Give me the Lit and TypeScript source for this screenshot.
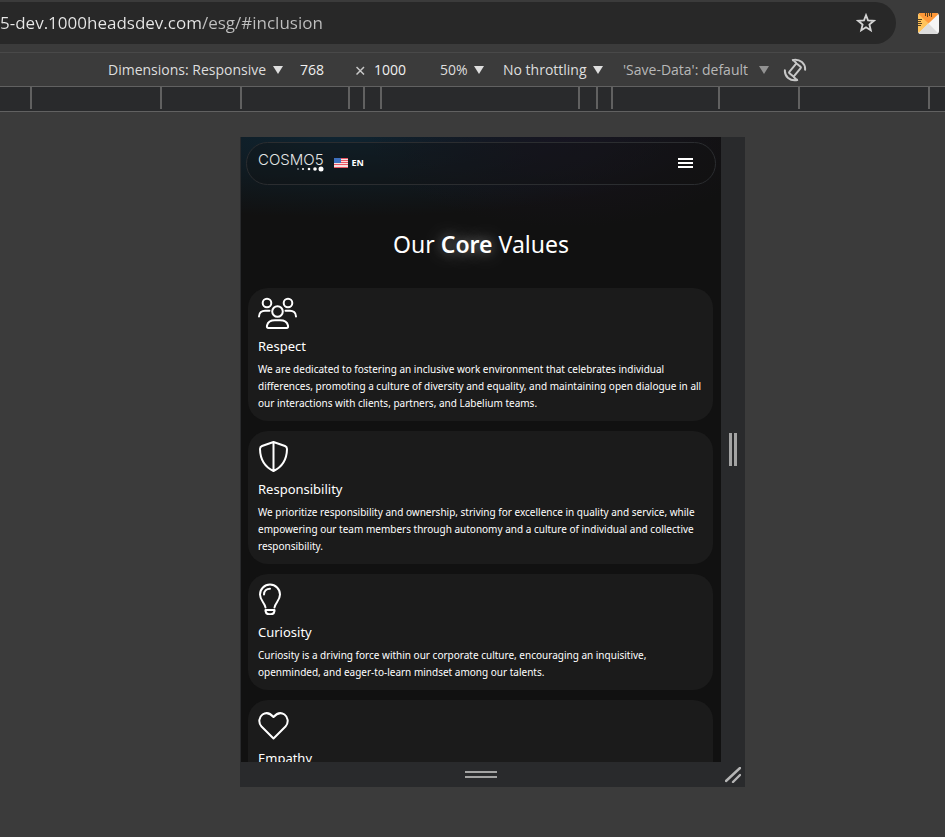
import { LitElement, html, css, svg } from "lit";
import { customElement } from "lit/decorators.js";

const TICK_GAPS = [130, 80, 108, 15, 17, 198, 18, 15, 107, 80, 130];

const icons = {
  people: svg`<svg class="icon" width="40" height="32" viewBox="0 0 40 32" aria-hidden="true">
    <circle cx="9" cy="6" r="4.3"/><circle cx="30" cy="6" r="4.3"/><circle cx="19.500" cy="14.500" r="5.300"/>
    <path d="M1 19.500C1 15.500 4 13.700 7 13.700H11.500M38 19.500C38 15.500 35 13.700 32 13.700H27.500"/>
    <path d="M10.500 31H28.500Q30.500 31 30 28.500C29 24.500 25.500 23.300 22 23.300H17C13.500 23.300 10 24.500 9 28.500Q8.500 31 10.500 31Z"/>
  </svg>`,
  shield: svg`<svg class="icon" width="40" height="32" viewBox="0 0 40 32" aria-hidden="true">
    <path d="M15.500 2L27 6Q29 6.800 29 9C28.800 19 24 27 15.500 31C7 27 2.200 19 2 9Q2 6.800 4 6ZM15.500 2V31"/>
  </svg>`,
  bulb: svg`<svg class="icon" width="40" height="32" viewBox="0 0 40 32" aria-hidden="true">
    <path d="M7.500 24.500C7 20 2 17.500 2 11.500A10 10 0 0 1 22 11.500C22 17.500 17 20 16.500 24.500M6 11.500C6 8 8.500 5.700 12 5.700"/>
    <path d="M7.500 27H16.500V28Q16 31.300 13 31.300H11Q8 31.300 7.500 28Z"/>
  </svg>`,
  heart: svg`<svg class="icon" width="40" height="32" viewBox="0 0 40 32" aria-hidden="true">
    <path d="M15.500 29.500L3.500 17.500C0 13.500 1 8 4.500 5.500C8 3.200 12.200 4.200 15.500 8C18.800 4.200 23 3.200 26.500 5.500C30 8 31 13.500 27.500 17.500Z"/>
  </svg>`,
};

const VALUES = [
  { icon: icons.people, title: "Respect", text: "We are dedicated to fostering an inclusive work environment that celebrates individual differences, promoting a culture of diversity and equality, and maintaining open dialogue in all our interactions with clients, partners, and Labelium teams." },
  { icon: icons.shield, title: "Responsibility", text: "We prioritize responsibility and ownership, striving for excellence in quality and service, while empowering our team members through autonomy and a culture of individual and collective responsibility." },
  { icon: icons.bulb, title: "Curiosity", text: "Curiosity is a driving force within our corporate culture, encouraging an inquisitive, openminded, and eager-to-learn mindset among our talents." },
  { icon: icons.heart, title: "Empathy", text: "" },
];

@customElement("cosmo-page")
export class CosmoPage extends LitElement {
  static styles = css`
    :host {
      display: block;
      overflow: hidden;
      padding: 5px 5px 0;
      box-sizing: border-box;
      color: #fff;
      font-family: "Noto Sans", sans-serif;
      background:
        radial-gradient(ellipse 200px 90px at 68% 0, #1a1322aa 0%, transparent 100%),
        radial-gradient(ellipse 380px 80px at 20% 0, #0f2431 0%, transparent 100%),
        #111;
    }
    .header {
      display: flex;
      align-items: center;
      height: 43px;
      box-sizing: border-box;
      padding: 0 22px 2px 11px;
      border: 1px solid #2b2d30;
      border-radius: 22px;
      background: #11111155;
    }
    .logo {
      display: flex;
      flex-direction: column;
      align-items: flex-end;
      color: #e4e6e6;
      text-decoration: none;
      font: 300 15px/12px Inter, sans-serif;
    }
    .dots { display: block; }
    .language {
      display: flex;
      align-items: center;
      gap: 4px;
      margin-left: 10px;
      padding: 0;
      border: 0;
      background: none;
      color: #fff;
      font: 700 9px/12px "Noto Sans", sans-serif;
    }
    .menu {
      display: block;
      margin-left: auto;
      padding: 0;
      border: 0;
      background: none;
      line-height: 0;
    }
    .heading {
      margin: 43px 0 27px;
      text-align: center;
      font-size: 23px;
      font-weight: 400;
      line-height: 33px;
    }
    .glow { font-weight: 600; text-shadow: 0 0 12px #ffffff55, 0 0 24px #ffffff66; }
    .cards { display: grid; gap: 10px; padding: 0 3px 0 2px; }
    .card {
      padding: 9px 10px;
      border-radius: 20px;
      background: #1b1b1b;
    }
    .icon {
      display: block;
      fill: none;
      stroke: #fff;
      stroke-width: 2;
      stroke-linecap: round;
      stroke-linejoin: round;
    }
    .title { margin: 7px 0 5px; font-size: 13px; font-weight: 400; line-height: 20px; }
    .text { margin: 0; font-size: 10px; font-weight: 400; line-height: 17px; }
  `;

  render() {
    return html`
      <header class="header">
        <a class="logo" href="#" aria-label="COSMO5">
          <span>COSMO5</span>
          <svg class="dots" width="28" height="6" fill="#fff" aria-hidden="true">
            <circle cx="2" cy="3" r=".7"/><circle cx="7" cy="3" r="1"/><circle cx="13" cy="3" r="1.300"/><circle cx="19" cy="3" r="1.800"/><circle cx="25" cy="3" r="2.500"/>
          </svg>
        </a>
        <button class="language">
          <svg width="14" height="10" viewBox="0 0 14 10" aria-hidden="true">
            <path fill="#f8dfe0" d="M0 0H14V10H0Z"/>
            <path stroke="#e95461" d="M0 .5H14M0 2.500H14M0 4.500H14M0 6.500H14M0 9.500H14"/>
            <path fill="#3d70bd" d="M0 0H7V5H0Z"/>
          </svg>
          EN
        </button>
        <button class="menu" aria-label="Menu">
          <svg width="15" height="10" aria-hidden="true"><path stroke="#fff" stroke-width="2" d="M0 1H15M0 5H15M0 9H15"/></svg>
        </button>
      </header>
      <h2 class="heading">Our <span class="glow">Core</span> Values</h2>
      <div class="cards">
        ${VALUES.map((v) => html`
          <section class="card">
            ${v.icon}
            <h3 class="title">${v.title}</h3>
            <p class="text">${v.text}</p>
          </section>`)}
      </div>
    `;
  }
}

@customElement("app-root")
export class AppRoot extends LitElement {
  static styles = css`
    :host {
      display: flex;
      flex-direction: column;
      min-height: 100vh;
      overflow: hidden;
      background: #3b3b3b;
      color: #dedede;
      font: 14px/20px "Open Sans", sans-serif;
    }
    .address-row { display: flex; align-items: center; gap: 22px; height: 48px; padding: 0 6px 2px 0; box-sizing: border-box; margin-bottom: 4px; }
    .address {
      display: flex;
      flex: 1;
      align-items: center;
      height: 42px;
      padding-right: 20px;
      border-radius: 0 21px 21px 0;
      background: #282828;
    }
    .url {
      flex: 1;
      min-width: 0;
      padding: 0;
      border: 0;
      outline: 0;
      font: 17px/24px "Open Sans", sans-serif;
      color: transparent;
      background: linear-gradient(90deg, #e8e8e8 202px, #c0c0c0 202px) text;
    }
    .plain { display: block; padding: 0; border: 0; background: none; line-height: 0; }
    .toolbar {
      display: flex;
      align-items: center;
      height: 34px;
      padding-left: 108px;
      box-sizing: border-box;
      border-top: 1px solid #494949;
      white-space: nowrap;
    }
    .drop { display: flex; align-items: center; gap: 6px; }
    .drop select {
      appearance: none;
      padding: 0;
      border: 0;
      background: none;
      color: inherit;
      font: inherit;
    }
    .drop.quiet { gap: 10px; color: #b8b8b8; }
    .quiet svg { opacity: .7; }
    .size {
      width: 50px;
      padding: 0;
      border: 0;
      background: none;
      color: #f0f0f0;
      font: inherit;
    }
    .dimensions { display: flex; align-items: center; margin: 0 16px 0 17px; gap: 9px; }
    .times { display: block; margin-left: -3px; }
    .throttle { margin: 0 20px 0 19px; }
    .rotate { margin-left: 14px; }
    .ruler {
      display: flex;
      justify-content: center;
      height: 26px;
      box-sizing: border-box;
      padding: 0 0 2px 14px;
      border: solid #616161;
      border-width: 1px 0;
      background: #292a2c;
    }
    .tick { flex: none; box-sizing: border-box; border-left: 2px solid #616161; }
    .tick:last-child { border-right: 2px solid #616161; }
    .stage { display: flex; flex: 1; justify-content: center; align-items: flex-start; padding: 25px 0 50px 40px; }
    .device {
      display: grid;
      grid-template: minmax(0, 625px) 25px / minmax(0, 480px) 24px;
      padding-left: 1px;
      background: #292a2c;
    }
    .screen { min-height: 0; }
    .handle { display: grid; place-items: center; }
  `;

  private arrow = () => html`<svg width="10" height="8" viewBox="0 0 10 8" aria-hidden="true"><path fill="currentColor" d="M0 0H10L5 8Z"/></svg>`;

  render() {
    return html`
      <div class="address-row">
        <div class="address">
          <input class="url" aria-label="Address" value="5-dev.1000headsdev.com/esg/#inclusion" />
          <button class="plain" aria-label="Bookmark">
            <svg width="20" height="20" viewBox="0 0 20 20"><path fill="none" stroke="#d5d5d5" stroke-width="1.800" d="M10 2.200L12 7.300L17.800 7.800L13.400 11.500L14.800 17.300L10 14.200L5.200 17.300L6.600 11.500L2.200 7.800L8 7.300Z"/></svg>
          </button>
        </div>
        <button class="plain" aria-label="Page ruler">
          <svg width="21" height="21" viewBox="0 0 21 21">
            <rect width="21" height="21" rx="3" fill="#f5f5f5"/>
            <path fill="#ffc45c" d="M3 0L10.500 10.500L1 20Q0 19 0 18V3Q0 0 3 0Z"/>
            <path fill="#ff9838" d="M2 0H18Q20 0 20.500 1L10.500 10.500L.5 1Z"/>
            <path fill="#ddd" d="M10.500 10.500L20 20Q19 21 18 21H3Q1 21 .5 20Z"/>
            <path stroke="#58401e" d="M7.500 0V3M9.500 0V4M11.500 0V3M13.500 0V4M0 6.500H4M0 8.500H3M0 10.500H4M0 12.500H3"/>
          </svg>
        </button>
      </div>
      <div class="toolbar">
        <label class="drop"><select aria-label="Dimensions"><option>Dimensions: Responsive</option></select>${this.arrow()}</label>
        <div class="dimensions">
          <input class="size" aria-label="Width" value="768" />
          <svg class="times" width="9" height="11" viewBox="0 0 9 11" aria-label="by"><path stroke="#c8c8c8" stroke-width="1.500" d="M.5 3L8 10.500M8 3L.5 10.500"/></svg>
          <input class="size" aria-label="Height" value="1000" />
        </div>
        <label class="drop"><select aria-label="Zoom"><option>50%</option></select>${this.arrow()}</label>
        <label class="drop throttle"><select aria-label="Throttling"><option>No throttling</option></select>${this.arrow()}</label>
        <label class="drop quiet"><select aria-label="Save-Data"><option>'Save-Data': default</option></select>${this.arrow()}</label>
        <button class="plain rotate" aria-label="Rotate">
          <svg width="24" height="24" viewBox="0 0 24 24" fill="none" stroke="#c8c8c8" stroke-width="2">
            <rect x="8.800" y="6" width="6.400" height="12" rx="1" transform="rotate(40 12 12)"/>
            <path d="M9 2.200C17 0 23 6 22 12.500M10 1.800L13.500 5.200M15 21.800C7 24 1 18 2 11.500M14 22.200L10.500 18.800"/>
          </svg>
        </button>
      </div>
      <div class="ruler">
        ${TICK_GAPS.map((w, i) => html`<span class="tick" style="width:${i === TICK_GAPS.length - 1 ? w + 2 : w}px"></span>`)}
      </div>
      <main class="stage">
        <div class="device">
          <cosmo-page class="screen"></cosmo-page>
          <div class="handle"><svg width="8" height="33"><path stroke="#a3a3a3" stroke-width="3" d="M1.500 0V33M6.500 0V33"/></svg></div>
          <div class="handle"><svg width="32" height="7"><path stroke="#a3a3a3" stroke-width="2" d="M0 1H32M0 6H32"/></svg></div>
          <div class="handle"><svg width="16" height="16"><path stroke="#b5b5b5" stroke-width="2.400" stroke-linecap="round" d="M1 14L15 1M8 15L15 8"/></svg></div>
        </div>
      </main>
    `;
  }
}
